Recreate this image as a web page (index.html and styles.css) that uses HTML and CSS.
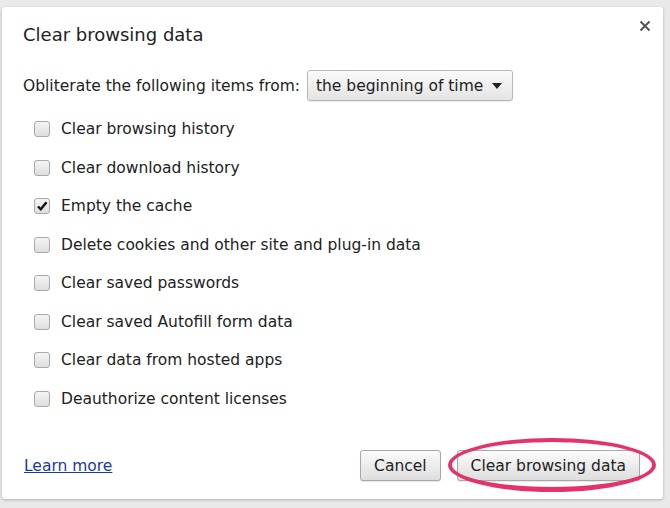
FILE: index.html
```html
<html>

<head>
    <meta name="viewport" content="width=device-width, initial-scale=1">
    <title>Clear browsing data</title>
    <link rel="stylesheet" href="styles.css">
</head>

<body>
    <div id="dialog">
        <div class="titleRow">
            <h1>Clear browsing data</h1>
            <svg class="close" width="12" height="12" viewBox="0 0 12 12">
                <path d="M1.5 1.5 L10.5 10.5 M10.5 1.5 L1.5 10.5" stroke="#555" stroke-width="2" />
            </svg>
        </div>
        <div class="fromRow">
            <span>Obliterate the following items from:</span>
            <div class="select">the beginning of time <span class="arrow"></span></div>
        </div>
        <ul class="items">
            <li><span class="box"></span>Clear browsing history</li>
            <li><span class="box"></span>Clear download history</li>
            <li><span class="box"><svg width="12" height="12" viewBox="0 0 12 12"><path d="M2 6.5 L4.8 9.3 L10.5 2.2" fill="none" stroke="#111" stroke-width="2.4" /></svg></span>Empty the cache</li>
            <li><span class="box"></span>Delete cookies and other site and plug-in data</li>
            <li><span class="box"></span>Clear saved passwords</li>
            <li><span class="box"></span>Clear saved Autofill form data</li>
            <li><span class="box"></span>Clear data from hosted apps</li>
            <li><span class="box"></span>Deauthorize content licenses</li>
        </ul>
        <div class="footer">
            <a href="#" class="learn">Learn more</a>
            <div class="buttons">
                <button class="btn">Cancel</button>
                <button class="btn primary">Clear browsing data<span class="ring"></span></button>
            </div>
        </div>
    </div>
</body>

</html>
```

FILE: styles.css
```css
body {
    background-color: #e9e9e9;
    font-family: "DejaVu Sans", sans-serif;
    margin: 0;
    padding: 7px 0 0 2px;
    color: #222;
}

#dialog {
    background-color: white;
    width: 661px;
    height: 492px;
    box-sizing: border-box;
    border-radius: 3px;
    box-shadow: 0px 1px 3px rgba(0, 0, 0, 0.25);
    padding: 17px 23px 0 21px;
    display: flex;
    flex-direction: column;
}

.titleRow {
    display: flex;
    justify-content: space-between;
    align-items: flex-start;
}

h1 {
    font-size: 18px;
    font-weight: normal;
    margin: 0;
    color: #222;
}

.close {
    margin-top: -4px;
    margin-right: -11px;
}

.fromRow {
    display: flex;
    align-items: center;
    margin-top: 25px;
    font-size: 15.5px;
}

.select {
    margin-left: 7px;
    height: 31px;
    box-sizing: border-box;
    padding: 0 10px 0 8px;
    display: flex;
    align-items: center;
    border: 1px solid #b8b8b8;
    border-radius: 3px;
    background-image: linear-gradient(to bottom, #fbfbfb, #e4e4e4);
    box-shadow: 0px 1px 1px rgba(0, 0, 0, 0.08);
}

.arrow {
    display: inline-block;
    margin-left: 9px;
    width: 0;
    height: 0;
    border-left: 5px solid transparent;
    border-right: 5px solid transparent;
    border-top: 6px solid #222;
}

.items {
    list-style: none;
    margin: 9px 0 0 0;
    padding: 0 0 0 11px;
    font-size: 15.5px;
}

.items li {
    display: flex;
    align-items: center;
    height: 38.5px;
}

.box {
    width: 14px;
    height: 14px;
    border: 1px solid #a9a9a9;
    border-radius: 3px;
    background-image: linear-gradient(to bottom, #f4f4f4, #dedede);
    margin-right: 11px;
    display: flex;
    align-items: center;
    justify-content: center;
}

.footer {
    margin-top: auto;
    display: flex;
    justify-content: space-between;
    align-items: center;
    padding-bottom: 18px;
}

.learn {
    color: #1b3a9e;
    font-size: 15.5px;
    margin-left: 1px;
}

.buttons {
    display: flex;
    gap: 16px;
}

.btn {
    font-family: "DejaVu Sans", sans-serif;
    font-size: 15.5px;
    color: #222;
    height: 31px;
    padding: 0 13px;
    border: 1px solid #a8a8a8;
    border-radius: 3px;
    background-image: linear-gradient(to bottom, #fbfbfb, #dedede);
    box-shadow: 0px 1px 1px rgba(0, 0, 0, 0.1);
}

.primary {
    position: relative;
}

.ring {
    /* the pink highlight drawn over the screenshot */
    position: absolute;
    left: -10px;
    right: -17px;
    top: -13px;
    bottom: -12px;
    border: 4px solid #e5326a;
    border-bottom-width: 5px;
    border-radius: 50%;
}
```
